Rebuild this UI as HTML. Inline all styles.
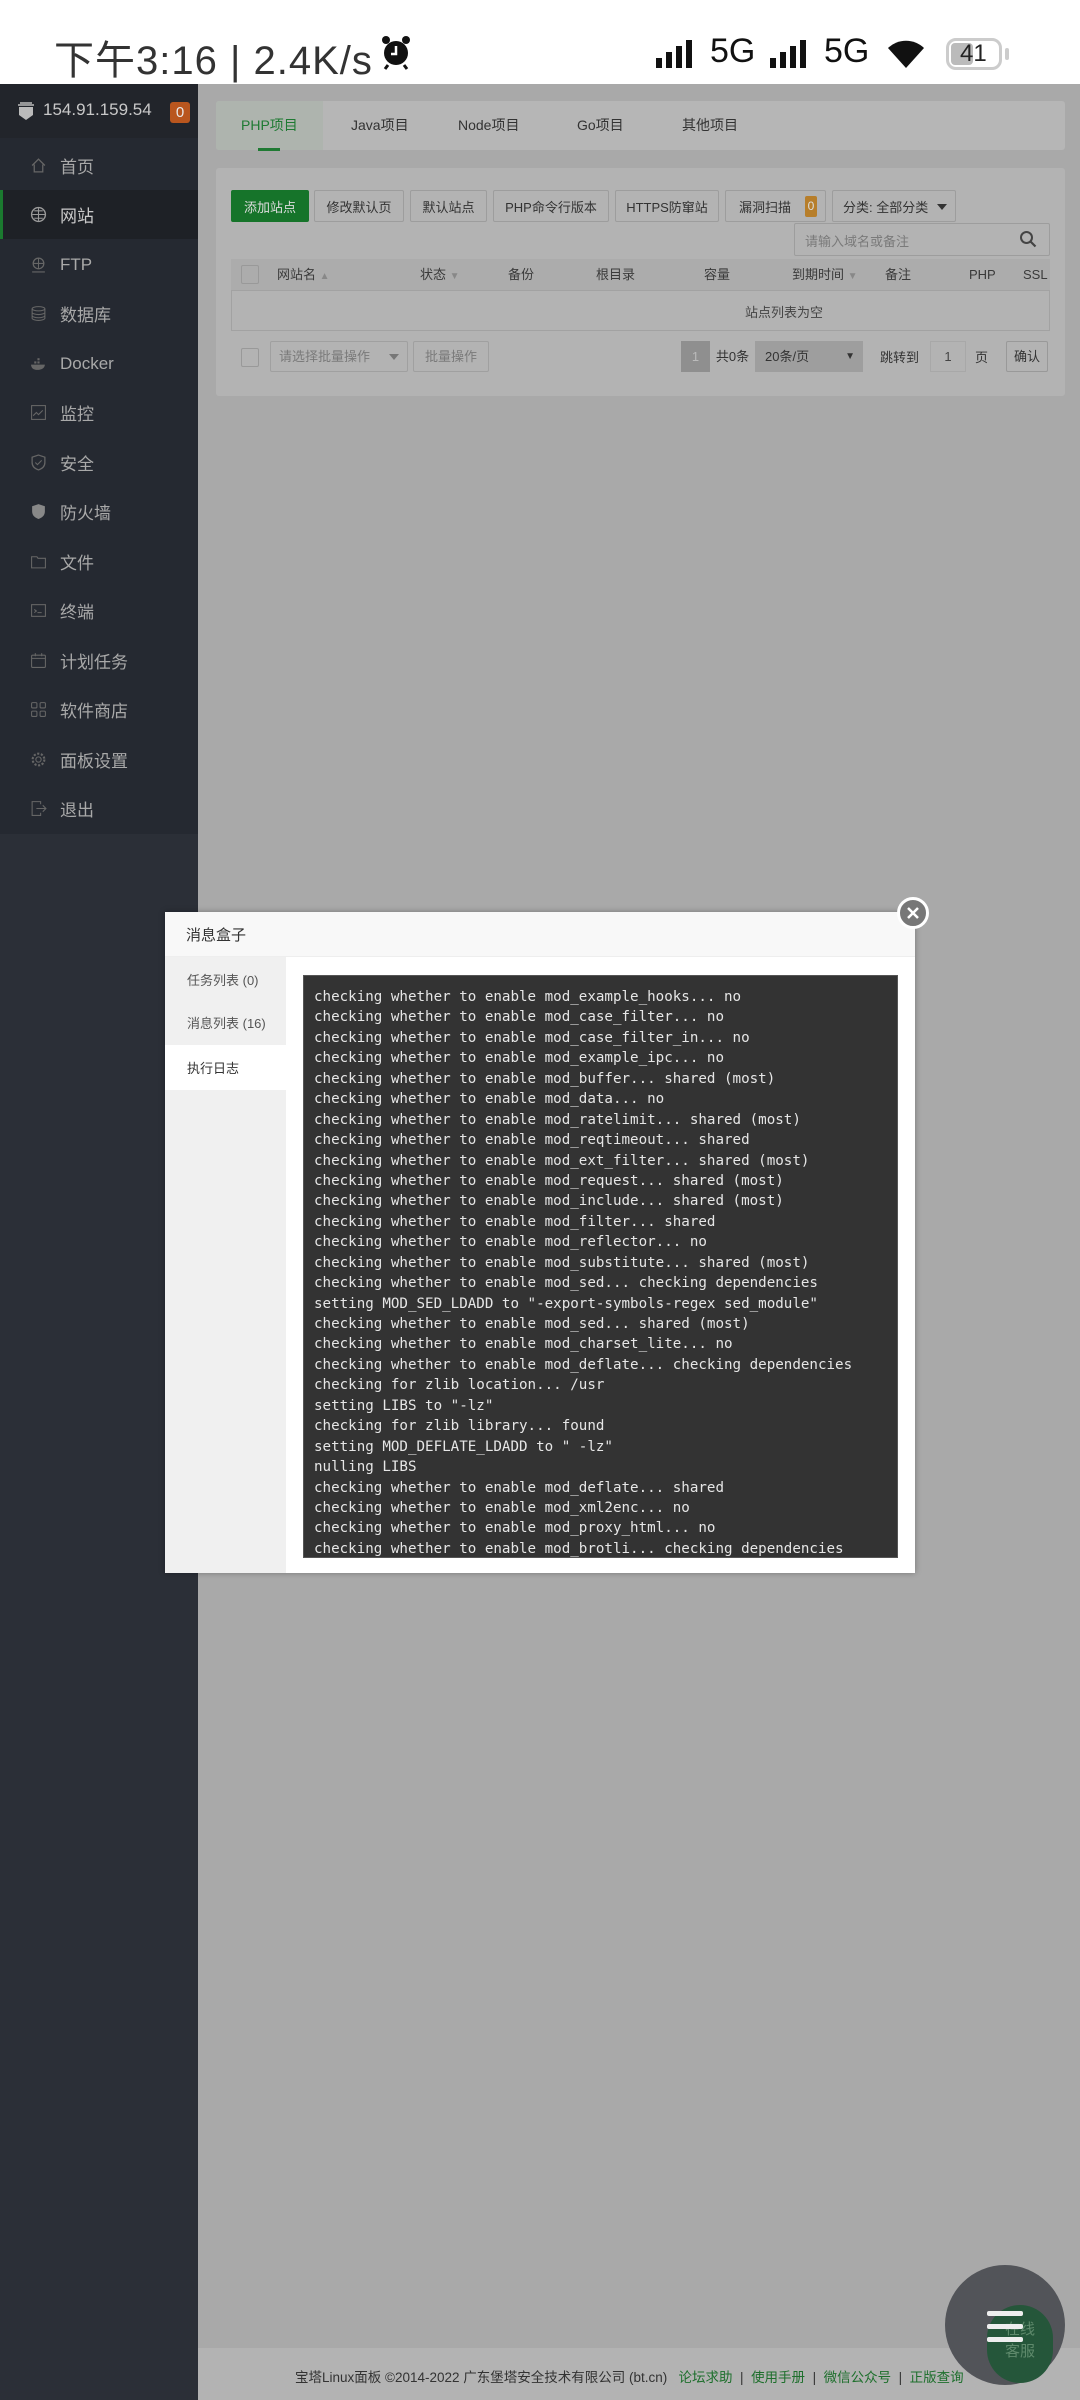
<!DOCTYPE html>
<html><head><meta charset="utf-8">
<style>
*{margin:0;padding:0;box-sizing:border-box}
body{width:1080px;height:2400px;overflow:hidden;position:relative;background:#a9a9a9;font-family:"Liberation Sans","Noto Sans CJK SC",sans-serif}
.abs{position:absolute}
#status{left:0;top:0;width:1080px;height:84px;background:#fff}
#sb{left:0;top:84px;width:198px;height:2316px;background:#2b2f37}
#menu{left:0;top:84px;width:198px;height:750px;background:#252931}
#sbh{left:0;top:84px;width:198px;height:54px;background:#22252b}
.mi{position:absolute;left:0;width:198px;height:49px;color:#a9a9a9;font-size:17px;display:flex;align-items:center}
.mi svg{position:absolute;left:30px;width:17px;height:17px}
.mi span{position:absolute;left:60px}
.card{background:#b3b3b3;border-radius:3px}
.btn{position:absolute;top:190px;height:32px;border:1px solid #9d9d9d;border-radius:2px;font-size:13px;color:#333;display:flex;align-items:center;justify-content:center;background:#b3b3b3}
.th{position:absolute;top:259px;font-size:13px;color:#3a3a3a;line-height:32px}
#log{left:303px;top:975px;width:595px;height:583px;background:#333;border:1px solid #555;overflow:hidden;padding:11px 0 0 10px;font-family:"DejaVu Sans Mono","Liberation Mono",monospace;font-size:14.2px;line-height:20.43px;color:#e6e6e6;white-space:pre}
</style></head><body>
<div id="status" class="abs">
 <div class="abs" style="left:54px;top:28px;font-size:40px;color:#333;letter-spacing:1px;white-space:nowrap">下午3:16 | 2.4K/s</div>
 <svg class="abs" style="left:380px;top:34px" width="32" height="36" viewBox="0 0 32 36"><circle cx="16" cy="19" r="12" fill="#111"/><circle cx="6" cy="6" r="4" fill="#111"/><circle cx="26" cy="6" r="4" fill="#111"/><path d="M16 12v8h-5" stroke="#fff" stroke-width="2.5" fill="none"/><path d="M8 31l-3 4M24 31l3 4" stroke="#111" stroke-width="3"/></svg>
 <svg class="abs" style="left:656px;top:40px" width="40" height="28"><rect x="0" y="18" width="6" height="10" fill="#111"/><rect x="10" y="12" width="6" height="16" fill="#111"/><rect x="20" y="6" width="6" height="22" fill="#111"/><rect x="30" y="0" width="6" height="28" fill="#111"/></svg>
 <div class="abs" style="left:710px;top:32px;font-size:34px;color:#111">5G</div>
 <svg class="abs" style="left:770px;top:40px" width="40" height="28"><rect x="0" y="18" width="6" height="10" fill="#111"/><rect x="10" y="12" width="6" height="16" fill="#111"/><rect x="20" y="6" width="6" height="22" fill="#111"/><rect x="30" y="0" width="6" height="28" fill="#111"/></svg>
 <div class="abs" style="left:824px;top:32px;font-size:34px;color:#111">5G</div>
 <svg class="abs" style="left:886px;top:38px" width="40" height="32" viewBox="0 0 40 32"><path d="M20 30L2 10a26 26 0 0136 0z" fill="#111"/></svg>
 <div class="abs" style="left:946px;top:38px;width:56px;height:32px;border:3px solid #ccc;border-radius:10px"></div>
 <div class="abs" style="left:951px;top:43px;width:22px;height:22px;background:#bbb;border-radius:4px"></div>
 <div class="abs" style="left:960px;top:40px;font-size:24px;color:#222">41</div>
 <div class="abs" style="left:1005px;top:48px;width:4px;height:12px;background:#ccc;border-radius:2px"></div>
</div>

<div id="sb" class="abs"></div>
<div id="menu" class="abs"></div>
<div id="sbh" class="abs">
 <svg class="abs" style="left:17px;top:17px" width="18" height="20" viewBox="0 0 18 20"><path d="M2 6h14v8l-7 5-7-5z" fill="#bbb"/><path d="M1 4h16M3 2h12" stroke="#bbb" stroke-width="1.5"/></svg>
 <div class="abs" style="left:43px;top:16px;font-size:17px;color:#c8c8c8">154.91.159.54</div>
 <div class="abs" style="left:170px;top:18px;width:20px;height:21px;background:#b9561e;border-radius:3px;color:#e8e8e8;font-size:15px;text-align:center;line-height:21px">0</div>
</div>
<div class="abs" style="left:0;top:190px;width:198px;height:49px;background:#1e2126"></div>
<div class="abs" style="left:0;top:190px;width:3px;height:49px;background:#1b7a2f"></div>

<div class="mi" style="top:141px"><svg viewBox="0 0 16 16"><path d="M2 8l6-6 6 6M4 7v7h8V7" stroke="#666" fill="none" stroke-width="1.2"/></svg><span>首页</span></div>
<div class="mi" style="top:190px;color:#c9c9c9"><svg viewBox="0 0 16 16"><circle cx="8" cy="8" r="6.5" stroke="#999" fill="none" stroke-width="1.3"/><path d="M2 8h12M8 2v12M4 4.5h8M4 11.5h8" stroke="#999" stroke-width="1"/></svg><span>网站</span></div>
<div class="mi" style="top:240px"><svg viewBox="0 0 16 16"><circle cx="8" cy="7" r="5" stroke="#666" fill="none" stroke-width="1.2"/><path d="M3 7h10M8 2v10M2 15h12" stroke="#666" stroke-width="1"/></svg><span>FTP</span></div>
<div class="mi" style="top:289px"><svg viewBox="0 0 16 16"><ellipse cx="8" cy="3.5" rx="6" ry="2" stroke="#666" fill="none"/><path d="M2 3.5v9c0 1 3 2 6 2s6-1 6-2v-9M2 7c0 1 3 2 6 2s6-1 6-2M2 10c0 1 3 2 6 2s6-1 6-2" stroke="#666" fill="none"/></svg><span>数据库</span></div>
<div class="mi" style="top:339px"><svg viewBox="0 0 16 16"><path d="M1 9h13c0 3-3 5-7 5S1 12 1 9z" fill="#666"/><rect x="4" y="6" width="2" height="2" fill="#666"/><rect x="7" y="6" width="2" height="2" fill="#666"/><rect x="7" y="3" width="2" height="2" fill="#666"/></svg><span>Docker</span></div>
<div class="mi" style="top:388px"><svg viewBox="0 0 16 16"><rect x="1.5" y="1.5" width="13" height="13" stroke="#666" fill="none"/><path d="M3 11l3-3 2 2 4-4" stroke="#666" fill="none"/></svg><span>监控</span></div>
<div class="mi" style="top:438px"><svg viewBox="0 0 16 16"><path d="M8 1l6 2v5c0 4-3 6-6 7-3-1-6-3-6-7V3z" stroke="#666" fill="none" stroke-width="1.2"/><path d="M5 8l2 2 4-4" stroke="#666" fill="none"/></svg><span>安全</span></div>
<div class="mi" style="top:487px"><svg viewBox="0 0 16 16"><path d="M8 1l6 2v5c0 4-3 6-6 7-3-1-6-3-6-7V3z" fill="#888"/></svg><span>防火墙</span></div>
<div class="mi" style="top:537px"><svg viewBox="0 0 16 16"><path d="M1.5 3.5h5l1 1.5h7v9h-13z" stroke="#666" fill="none"/></svg><span>文件</span></div>
<div class="mi" style="top:586px"><svg viewBox="0 0 16 16"><rect x="1.5" y="2.5" width="13" height="11" stroke="#666" fill="none"/><path d="M4 7l2 1.5L4 10M7 10h4" stroke="#666" fill="none"/></svg><span>终端</span></div>
<div class="mi" style="top:636px"><svg viewBox="0 0 16 16"><rect x="1.5" y="3" width="13" height="11.5" rx="1" stroke="#666" fill="none"/><path d="M1.5 6h13M5 1v3M11 1v3" stroke="#666"/></svg><span>计划任务</span></div>
<div class="mi" style="top:685px"><svg viewBox="0 0 16 16"><rect x="1.5" y="1.5" width="5" height="5" rx="1" stroke="#666" fill="none"/><rect x="9.5" y="1.5" width="5" height="5" rx="1" stroke="#666" fill="none"/><rect x="1.5" y="9.5" width="5" height="5" rx="1" stroke="#666" fill="none"/><rect x="9.5" y="9.5" width="5" height="5" rx="1" stroke="#666" fill="none"/></svg><span>软件商店</span></div>
<div class="mi" style="top:735px"><svg viewBox="0 0 16 16"><circle cx="8" cy="8" r="5.5" stroke="#666" fill="none" stroke-width="2" stroke-dasharray="2 1.5"/><circle cx="8" cy="8" r="2.5" stroke="#666" fill="none"/></svg><span>面板设置</span></div>
<div class="mi" style="top:784px"><svg viewBox="0 0 16 16"><path d="M10 4V1.5H2v13h8V12M6 8h9M12 5l3 3-3 3" stroke="#666" fill="none"/></svg><span>退出</span></div>

<div class="abs card" style="left:216px;top:101px;width:849px;height:49px;background:#b6b6b6"></div>
<div class="abs" style="left:216px;top:101px;width:107px;height:49px;background:#aeb4ae;border-radius:3px 0 0 3px"></div>
<div class="abs" style="left:241px;top:115px;font-size:14px;color:#1f7a33">PHP项目</div>
<div class="abs" style="left:258px;top:148px;width:22px;height:3px;background:#1f7a33"></div>
<div class="abs" style="left:351px;top:115px;font-size:14px;color:#333">Java项目</div>
<div class="abs" style="left:458px;top:115px;font-size:14px;color:#333">Node项目</div>
<div class="abs" style="left:577px;top:115px;font-size:14px;color:#333">Go项目</div>
<div class="abs" style="left:682px;top:115px;font-size:14px;color:#333">其他项目</div>

<div class="abs card" style="left:216px;top:168px;width:849px;height:228px"></div>
<div class="btn" style="left:231px;width:78px;background:#16742a;border-color:#16742a;color:#ddd">添加站点</div>
<div class="btn" style="left:314px;width:90px">修改默认页</div>
<div class="btn" style="left:410px;width:77px">默认站点</div>
<div class="btn" style="left:493px;width:116px">PHP命令行版本</div>
<div class="btn" style="left:615px;width:104px">HTTPS防窜站</div>
<div class="btn" style="left:725px;width:101px;justify-content:flex-start;padding-left:13px">漏洞扫描<span style="position:absolute;right:8px;top:5px;width:12px;height:21px;background:#b77e2a;color:#ddd;font-size:12px;border-radius:2px;text-align:center;line-height:21px">0</span></div>
<div class="btn" style="left:832px;width:124px;justify-content:flex-start;padding-left:10px">分类: 全部分类<span style="position:absolute;right:8px;top:13px;border:5px solid transparent;border-top:6px solid #333"></span></div>
<div class="abs" style="left:794px;top:223px;width:256px;height:33px;border:1px solid #9d9d9d;border-radius:2px"></div>
<div class="abs" style="left:805px;top:231px;font-size:13px;color:#7a7a7a">请输入域名或备注</div>
<svg class="abs" style="left:1019px;top:230px" width="18" height="18" viewBox="0 0 18 18"><circle cx="7.5" cy="7.5" r="5.5" stroke="#444" stroke-width="2" fill="none"/><path d="M11.5 11.5l5 5" stroke="#444" stroke-width="2.2"/></svg>

<div class="abs" style="left:231px;top:259px;width:819px;height:32px;background:#acacac;border-bottom:1px solid #a2a2a2"></div>
<div class="abs" style="left:231px;top:291px;width:819px;height:40px;border:1px solid #a2a2a2;border-top:none"></div>
<div class="abs" style="left:241px;top:265px;width:18px;height:19px;border:1px solid #999;border-radius:2px"></div>
<div class="th" style="left:277px">网站名 <span style="color:#888;font-size:10px">▲</span></div>
<div class="th" style="left:420px">状态 <span style="color:#888;font-size:10px">▼</span></div>
<div class="th" style="left:508px">备份</div>
<div class="th" style="left:596px">根目录</div>
<div class="th" style="left:704px">容量</div>
<div class="th" style="left:792px">到期时间 <span style="color:#888;font-size:10px">▼</span></div>
<div class="th" style="left:885px">备注</div>
<div class="th" style="left:969px">PHP</div>
<div class="th" style="left:1023px">SSL</div>
<div class="abs" style="left:1050px;top:255px;width:15px;height:80px;background:#b3b3b3"></div>
<div class="abs" style="left:745px;top:302px;font-size:13px;color:#444">站点列表为空</div>

<div class="abs" style="left:241px;top:348px;width:18px;height:19px;border:1px solid #999;border-radius:2px"></div>
<div class="abs" style="left:270px;top:341px;width:138px;height:31px;border:1px solid #a0a0a0;border-radius:2px;font-size:13px;color:#7a7a7a;line-height:29px;padding-left:8px">请选择批量操作<span style="position:absolute;right:8px;top:12px;border:5px solid transparent;border-top:6px solid #777"></span></div>
<div class="abs" style="left:413px;top:341px;width:76px;height:31px;border:1px solid #a0a0a0;border-radius:2px;font-size:13px;color:#7a7a7a;line-height:29px;text-align:center">批量操作</div>
<div class="abs" style="left:681px;top:341px;width:29px;height:31px;background:#8f8f8f;color:#bbb;font-size:13px;text-align:center;line-height:31px">1</div>
<div class="abs" style="left:710px;top:341px;width:45px;height:31px;background:#b3b3b3;color:#333;font-size:13px;text-align:center;line-height:31px">共0条</div>
<div class="abs" style="left:755px;top:341px;width:108px;height:31px;background:#9e9e9e;color:#333;font-size:13px;line-height:31px;padding-left:10px">20条/页<span style="position:absolute;right:8px;font-size:10px">▼</span></div>
<div class="abs" style="left:880px;top:347px;font-size:13px;color:#333">跳转到</div>
<div class="abs" style="left:930px;top:341px;width:36px;height:31px;border:1px solid #a8a8a8;color:#444;font-size:13px;text-align:center;line-height:29px">1</div>
<div class="abs" style="left:975px;top:347px;font-size:13px;color:#333">页</div>
<div class="abs" style="left:1006px;top:341px;width:42px;height:31px;border:1px solid #999;border-radius:2px;color:#333;font-size:13px;text-align:center;line-height:29px">确认</div>

<div class="abs" style="left:198px;top:2348px;width:882px;height:52px;background:#b3b3b3"></div>
<div class="abs" style="left:295px;top:2366px;font-size:13.5px;color:#333;white-space:nowrap">宝塔Linux面板 ©2014-2022 广东堡塔安全技术有限公司 (bt.cn)&nbsp;&nbsp; <span style="color:#1d6f2c">论坛求助</span> &nbsp;| &nbsp;<span style="color:#1d6f2c">使用手册</span> &nbsp;| &nbsp;<span style="color:#1d6f2c">微信公众号</span> &nbsp;| &nbsp;<span style="color:#1d6f2c">正版查询</span></div>

<div class="abs" style="left:945px;top:2265px;width:120px;height:120px;border-radius:50%;background:#525459"></div>
<div class="abs" style="left:987px;top:2305px;width:66px;height:78px;border-radius:33px;background:#25563a;color:#5f8a6c;font-size:15px;text-align:center;padding-top:14px;line-height:22px">在线<br>客服</div>
<div class="abs" style="left:987px;top:2311px;width:36px;height:5px;background:#eee;border-radius:2px"></div>
<div class="abs" style="left:987px;top:2324px;width:36px;height:5px;background:#eee;border-radius:2px"></div>
<div class="abs" style="left:987px;top:2337px;width:36px;height:5px;background:#eee;border-radius:2px"></div>

<div class="abs" style="left:165px;top:912px;width:750px;height:661px;background:#fff;box-shadow:0 0 6px rgba(0,0,0,.3)"></div>
<div class="abs" style="left:165px;top:912px;width:750px;height:45px;background:#f8f8f8;border-bottom:1px solid #eee"></div>
<div class="abs" style="left:186px;top:924px;font-size:15px;color:#333">消息盒子</div>
<div class="abs" style="left:165px;top:957px;width:121px;height:616px;background:#f0f0f0"></div>
<div class="abs" style="left:165px;top:1045px;width:121px;height:45px;background:#fff"></div>
<div class="abs" style="left:187px;top:970px;font-size:13px;color:#555">任务列表 (0)</div>
<div class="abs" style="left:187px;top:1013px;font-size:13px;color:#555">消息列表 (16)</div>
<div class="abs" style="left:187px;top:1058px;font-size:13px;color:#333">执行日志</div>
<div id="log" class="abs">checking whether to enable mod_example_hooks... no
checking whether to enable mod_case_filter... no
checking whether to enable mod_case_filter_in... no
checking whether to enable mod_example_ipc... no
checking whether to enable mod_buffer... shared (most)
checking whether to enable mod_data... no
checking whether to enable mod_ratelimit... shared (most)
checking whether to enable mod_reqtimeout... shared
checking whether to enable mod_ext_filter... shared (most)
checking whether to enable mod_request... shared (most)
checking whether to enable mod_include... shared (most)
checking whether to enable mod_filter... shared
checking whether to enable mod_reflector... no
checking whether to enable mod_substitute... shared (most)
checking whether to enable mod_sed... checking dependencies
setting MOD_SED_LDADD to "-export-symbols-regex sed_module"
checking whether to enable mod_sed... shared (most)
checking whether to enable mod_charset_lite... no
checking whether to enable mod_deflate... checking dependencies
checking for zlib location... /usr
setting LIBS to "-lz"
checking for zlib library... found
setting MOD_DEFLATE_LDADD to " -lz"
nulling LIBS
checking whether to enable mod_deflate... shared
checking whether to enable mod_xml2enc... no
checking whether to enable mod_proxy_html... no
checking whether to enable mod_brotli... checking dependencies</div>
<div class="abs" style="left:897px;top:897px;width:32px;height:32px;border-radius:50%;background:#777;border:3px solid #fff"></div>
<svg class="abs" style="left:905px;top:905px" width="16" height="16"><path d="M3 3l10 10M13 3L3 13" stroke="#fff" stroke-width="2.5"/></svg>
</body></html>
